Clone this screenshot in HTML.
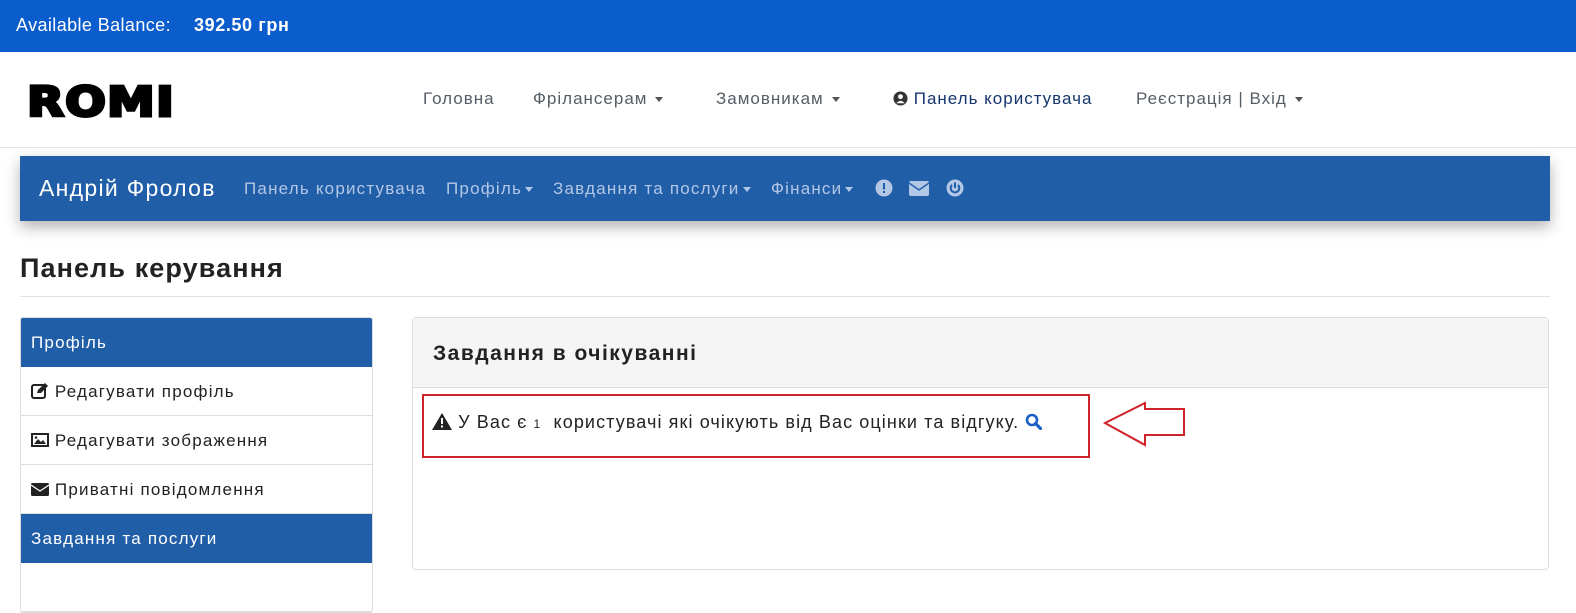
<!DOCTYPE html>
<html><head><meta charset="utf-8"><style>
*{box-sizing:border-box;margin:0;padding:0}
body{width:1576px;height:579px;overflow:hidden;background:#fff;font-family:"Liberation Sans","DejaVu Sans",sans-serif;color:#212529;position:relative}
.top{position:absolute;left:0;top:0;width:1576px;height:52px;background:#0b5ccc;color:#fff;font-size:18px;line-height:50px;padding-left:16px;letter-spacing:.4px}
.top b{position:absolute;left:194px;letter-spacing:.6px}
.logo{position:absolute;left:27px;top:78px;font-size:41px;font-weight:bold;letter-spacing:1px;-webkit-text-stroke:3px #000;color:#000;transform:scaleX(1.17);transform-origin:left;font-family:"DejaVu Sans",sans-serif}
.nav{position:absolute;top:89px;font-size:17px;color:#555d66;letter-spacing:1px}
.caret{display:inline-block;border-top:5px solid #555;border-left:4px solid transparent;border-right:4px solid transparent;vertical-align:middle;margin-left:8px}
.hr1{position:absolute;left:0;top:147px;width:1576px;border-top:1px solid #e5e5e5}
.bar{position:absolute;left:20px;top:156px;width:1530px;height:65px;background:#215ea8;box-shadow:0 6px 14px rgba(0,0,0,.3)}
.bar .n{position:absolute;left:19px;top:19px;color:#fff;font-size:23px;letter-spacing:1.3px}
.bar .l{position:absolute;top:23px;color:#b3c7e6;font-size:17px;letter-spacing:1.2px;white-space:nowrap}
.bar .caret{border-top-color:#b3c7e6;margin-left:3px}
h1{position:absolute;left:20px;top:253px;font-size:27px;font-weight:bold;color:#222;letter-spacing:1.1px}
.hr2{position:absolute;left:20px;top:296px;width:1530px;border-top:1px solid #e3e3e3}
.side{position:absolute;left:20px;top:317px;width:353px;border:1px solid #ddd;border-radius:3px;overflow:hidden}
.side div{height:49px;line-height:49px;padding-left:10px;font-size:17px;border-bottom:1px solid #ddd;color:#222;letter-spacing:1.2px}
.side .h{background:#215ea8;color:#fff;border-color:#215ea8}
.panel{position:absolute;left:412px;top:317px;width:1137px;height:253px;border:1px solid #ddd;border-radius:4px}
.ph{height:70px;background:#f5f5f5;border-bottom:1px solid #ddd;padding:24px 20px;font-size:21px;font-weight:bold;color:#222;letter-spacing:1.5px}
.alert{position:absolute;left:422px;top:394px;width:668px;height:64px;border:2px solid #d0222a}
.atext{position:absolute;left:432px;top:412px;font-size:18px;color:#222;letter-spacing:1.1px;white-space:nowrap}
</style></head><body>
<div class="top">Available Balance: <b>392.50 грн</b></div>
<div class="logo">ROMI</div>
<div class="nav" style="left:423px">Головна</div>
<div class="nav" style="left:533px">Фрілансерам<span class="caret"></span></div>
<div class="nav" style="left:716px">Замовникам<span class="caret"></span></div>
<div class="nav" style="left:893px;color:#15366e"><svg width="15" height="15" viewBox="0 0 16 16" style="vertical-align:-2px"><circle cx="8" cy="8" r="7.5" fill="#333"/><circle cx="8" cy="6" r="2.6" fill="#fff"/><path d="M3.5 13 Q8 8 12.5 13" fill="#fff"/></svg> Панель користувача</div>
<div class="nav" style="left:1136px">Реєстрація | Вхід<span class="caret"></span></div>
<div class="hr1"></div>
<div class="bar">
<div class="n">Андрій Фролов</div>
<div class="l" style="left:224px">Панель користувача</div>
<div class="l" style="left:426px">Профіль<span class="caret"></span></div>
<div class="l" style="left:533px">Завдання та послуги<span class="caret"></span></div>
<div class="l" style="left:751px">Фінанси<span class="caret"></span></div>
<svg style="position:absolute;left:855px;top:23px" width="18" height="18" viewBox="0 0 18 18"><circle cx="9" cy="9" r="8.5" fill="#b3c7e6"/><rect x="8" y="4" width="2" height="6.5" fill="#215ea8"/><rect x="8" y="12" width="2" height="2" fill="#215ea8"/></svg>
<svg style="position:absolute;left:889px;top:25px" width="20" height="15" viewBox="0 0 20 15"><rect width="20" height="15" rx="2" fill="#b3c7e6"/><path d="M0 2 L10 9 L20 2" stroke="#215ea8" stroke-width="1.5" fill="none"/></svg>
<svg style="position:absolute;left:926px;top:23px" width="18" height="18" viewBox="0 0 18 18"><circle cx="9" cy="9" r="8.5" fill="#b3c7e6"/><path d="M6 6 A4.3 4.3 0 1 0 12 6" stroke="#215ea8" stroke-width="2" fill="none"/><rect x="8" y="3.5" width="2" height="5.5" fill="#215ea8"/></svg>
</div>
<h1>Панель керування</h1>
<div class="hr2"></div>
<div class="side">
<div class="h">Профіль</div>
<div><svg width="18" height="16" viewBox="0 0 18 16" style="vertical-align:-2px"><rect x="1" y="2" width="13" height="13" rx="2" fill="none" stroke="#222" stroke-width="2"/><path d="M6 10 L7 7 L14 0 L17 3 L10 10Z" fill="#222"/></svg> Редагувати профіль</div>
<div><svg width="18" height="14" viewBox="0 0 18 14" style="vertical-align:-1px"><rect x="1" y="1" width="16" height="12" fill="none" stroke="#222" stroke-width="2"/><path d="M3 11 L7 6 L10 9 L12 7 L15 11Z" fill="#222"/><circle cx="5" cy="4.5" r="1.3" fill="#222"/></svg> Редагувати зображення</div>
<div><svg width="18" height="13" viewBox="0 0 18 13" style="vertical-align:-1px"><rect width="18" height="13" rx="1.5" fill="#222"/><path d="M0 2 L9 8 L18 2" stroke="#fff" stroke-width="1.2" fill="none"/></svg> Приватні повідомлення</div>
<div class="h">Завдання та послуги</div>
<div></div>
</div>
<div class="panel"><div class="ph">Завдання в очікуванні</div></div>
<div class="alert"></div>
<div class="atext"><svg width="20" height="17" viewBox="0 0 20 17" style="vertical-align:-2px"><path d="M10 0 L20 17 L0 17Z" fill="#222"/><rect x="9" y="5" width="2" height="6" fill="#fff"/><rect x="9" y="12.5" width="2" height="2" fill="#fff"/></svg> У Вас є <span style="font-size:12px">1</span>&nbsp; користувачі які очікують від Вас оцінки та відгуку. <svg width="17" height="17" viewBox="0 0 17 17" style="vertical-align:-2px"><circle cx="7" cy="7" r="5" stroke="#1a5fc4" stroke-width="2.6" fill="none"/><path d="M10.5 10.5 L15.5 15.5" stroke="#1a5fc4" stroke-width="3.2" stroke-linecap="round"/></svg></div>
<svg style="position:absolute;left:1100px;top:400px" width="90" height="50" viewBox="0 0 90 50"><path d="M5 23 L45 3 L45 9 L84 9 L84 35 L45 35 L45 45 Z" fill="none" stroke="#d0222a" stroke-width="2"/></svg>
</body></html>
